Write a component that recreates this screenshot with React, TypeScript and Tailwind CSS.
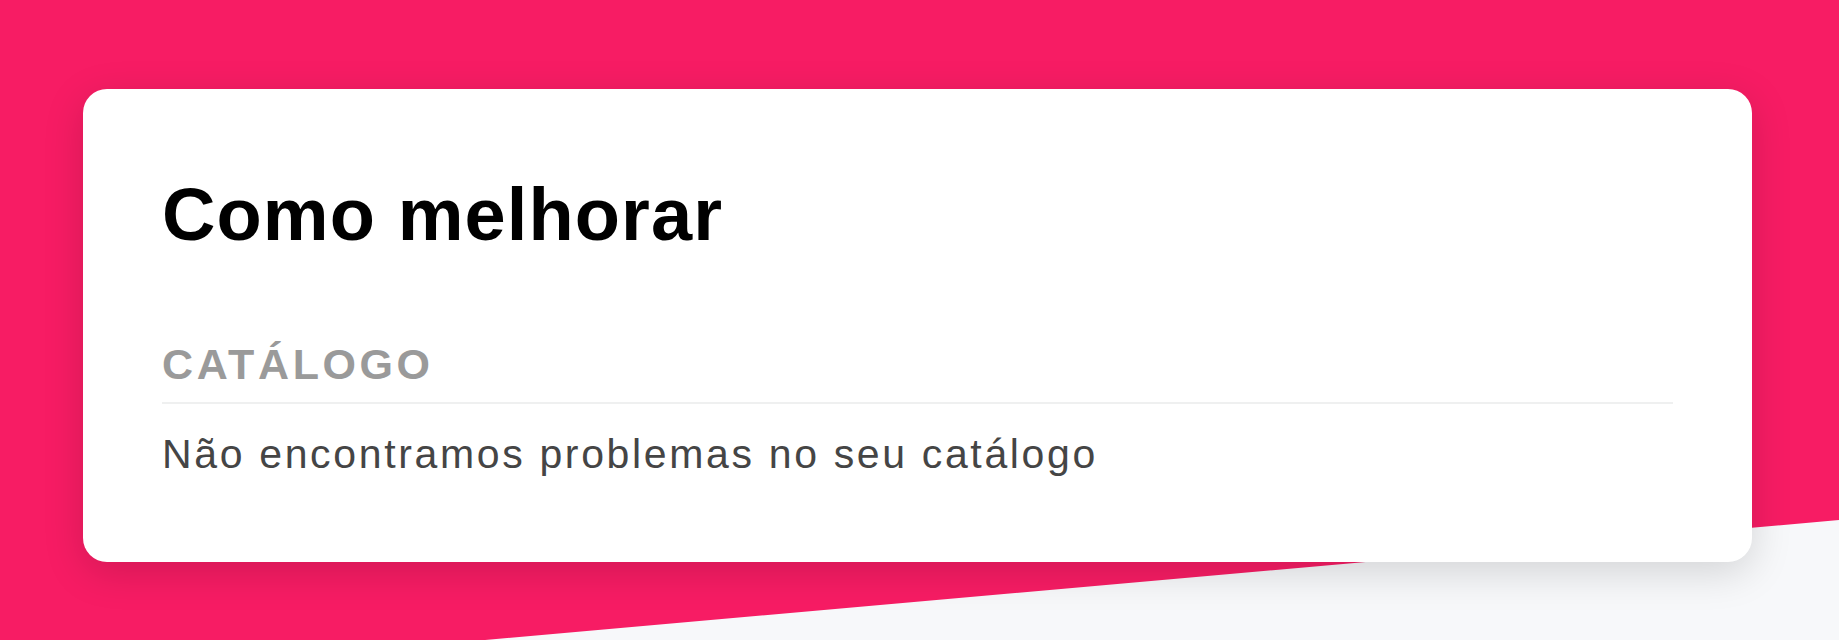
import React from 'react';

const sans = "font-['Liberation_Sans',Arial,sans-serif]";

const App: React.FC = () => {
  return (
    <div className={`relative h-[640px] w-full overflow-hidden bg-[#f7f8fa] ${sans}`}>
      {/* Pink diagonal backdrop */}
      <div className="absolute inset-0 bg-[#f71c64] [clip-path:polygon(0_0,100%_0,100%_520px,0_683px)]" />

      <div className="relative px-[83px] pt-[89px]">
        <div className="w-[1669px] rounded-3xl bg-white px-[79px] pt-[89px] pb-[87px] shadow-[0_10px_40px_rgba(0,0,0,0.15)]">
          <h1 className="text-[74px] font-bold leading-none tracking-[1.1px] text-black">Como melhorar</h1>

          <div className="mt-[91px]">
            <h2 className="text-[43px] font-bold leading-none tracking-[3.6px] text-[#9a9a9a]">CATÁLOGO</h2>
            <div className="mt-[16px] h-[2px] w-full bg-[#eff0f0]" />
            <p className="mt-[30px] text-[41px] leading-none tracking-[2.65px] text-[#454545]">
              Não encontramos problemas no seu catálogo
            </p>
          </div>
        </div>
      </div>
    </div>
  );
};

export default App;
